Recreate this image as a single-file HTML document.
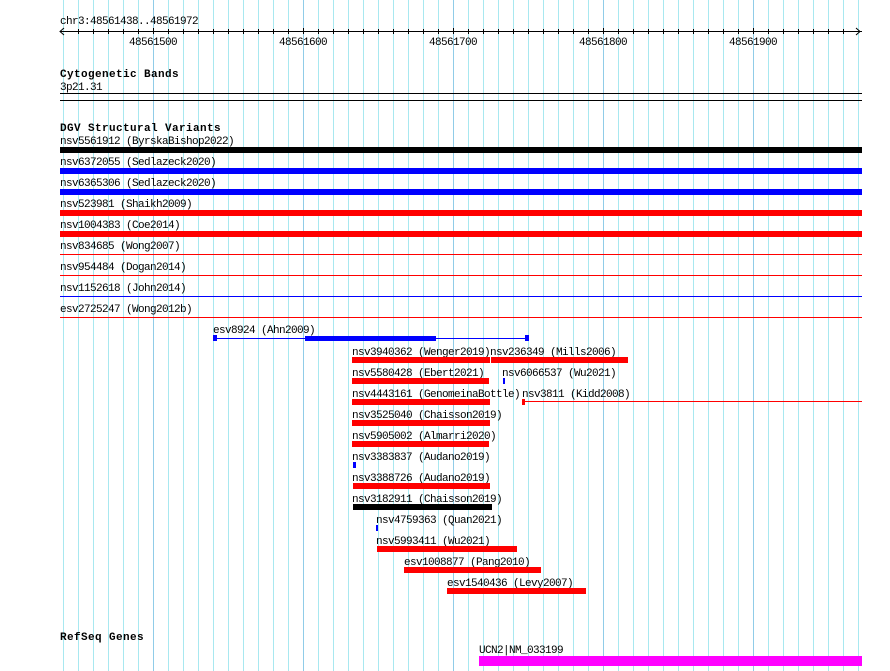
<!DOCTYPE html>
<html><head><meta charset="utf-8"><style>
html,body{margin:0;padding:0;background:#fff;}
body{width:890px;height:671px;position:relative;overflow:hidden;font-family:"Liberation Mono","DejaVu Sans Mono",monospace;font-size:11px;letter-spacing:-0.6px;line-height:10px;color:#000;}
.a{position:absolute;white-space:pre;margin-top:2px;}
.b{font-weight:bold;letter-spacing:0.4px;}
.G{position:absolute;top:0;height:671px;width:1px;background:#90cce8;}
.r{position:absolute;}
.t{position:absolute;top:29px;width:1px;height:5px;background:#000;}
</style></head><body>
<div class="r" style="left:63px;top:0;width:796px;height:671px;background:repeating-linear-gradient(to right,#a8e8f0 0,#a8e8f0 1px,transparent 1px,transparent 15px);"></div>
<div class="G" style="left:153px"></div><div class="G" style="left:303px"></div><div class="G" style="left:453px"></div><div class="G" style="left:603px"></div><div class="G" style="left:753px"></div>

<div class="a" style="left:60px;top:15px">chr3:48561438..48561972</div>
<div class="r" style="left:60px;top:31px;width:802px;height:1px;background:#000"></div>
<svg class="r" style="left:59px;top:27px" width="6" height="9"><path d="M5 1 L1 4.5 L5 8" stroke="#000" fill="none"/></svg>
<svg class="r" style="left:855px;top:27px" width="6" height="9"><path d="M1 1 L5 4.5 L1 8" stroke="#000" fill="none"/></svg>
<div class="t" style="left:78px"></div><div class="t" style="left:93px"></div><div class="t" style="left:108px"></div><div class="t" style="left:123px"></div><div class="t" style="left:138px"></div><div class="t" style="left:153px;top:28px;height:6px"></div><div class="t" style="left:168px"></div><div class="t" style="left:183px"></div><div class="t" style="left:198px"></div><div class="t" style="left:213px"></div><div class="t" style="left:228px"></div><div class="t" style="left:243px"></div><div class="t" style="left:258px"></div><div class="t" style="left:273px"></div><div class="t" style="left:288px"></div><div class="t" style="left:303px;top:28px;height:6px"></div><div class="t" style="left:318px"></div><div class="t" style="left:333px"></div><div class="t" style="left:348px"></div><div class="t" style="left:363px"></div><div class="t" style="left:378px"></div><div class="t" style="left:393px"></div><div class="t" style="left:408px"></div><div class="t" style="left:423px"></div><div class="t" style="left:438px"></div><div class="t" style="left:453px;top:28px;height:6px"></div><div class="t" style="left:468px"></div><div class="t" style="left:483px"></div><div class="t" style="left:498px"></div><div class="t" style="left:513px"></div><div class="t" style="left:528px"></div><div class="t" style="left:543px"></div><div class="t" style="left:558px"></div><div class="t" style="left:573px"></div><div class="t" style="left:588px"></div><div class="t" style="left:603px;top:28px;height:6px"></div><div class="t" style="left:618px"></div><div class="t" style="left:633px"></div><div class="t" style="left:648px"></div><div class="t" style="left:663px"></div><div class="t" style="left:678px"></div><div class="t" style="left:693px"></div><div class="t" style="left:708px"></div><div class="t" style="left:723px"></div><div class="t" style="left:738px"></div><div class="t" style="left:753px;top:28px;height:6px"></div><div class="t" style="left:768px"></div><div class="t" style="left:783px"></div><div class="t" style="left:798px"></div><div class="t" style="left:813px"></div><div class="t" style="left:828px"></div><div class="t" style="left:843px"></div>
<div class="a" style="left:129px;top:36px">48561500</div>
<div class="a" style="left:279px;top:36px">48561600</div>
<div class="a" style="left:429px;top:36px">48561700</div>
<div class="a" style="left:579px;top:36px">48561800</div>
<div class="a" style="left:729px;top:36px">48561900</div>

<div class="a b" style="left:60px;top:68px">Cytogenetic Bands</div>
<div class="a" style="left:60px;top:81px">3p21.31</div>
<div class="r" style="left:60px;top:93px;width:802px;height:1px;background:#000"></div>
<div class="r" style="left:60px;top:100px;width:802px;height:1px;background:#000"></div>

<div class="a b" style="left:60px;top:122px">DGV Structural Variants</div>
<div class="a" style="left:60px;top:135px">nsv5561912 (ByrskaBishop2022)</div>
<div class="r" style="left:60px;top:147px;width:802px;height:6px;background:#000"></div>
<div class="a" style="left:60px;top:156px">nsv6372055 (Sedlazeck2020)</div>
<div class="r" style="left:60px;top:168px;width:802px;height:6px;background:#0000ff"></div>
<div class="a" style="left:60px;top:177px">nsv6365306 (Sedlazeck2020)</div>
<div class="r" style="left:60px;top:189px;width:802px;height:6px;background:#0000ff"></div>
<div class="a" style="left:60px;top:198px">nsv523981 (Shaikh2009)</div>
<div class="r" style="left:60px;top:210px;width:802px;height:6px;background:#ff0000"></div>
<div class="a" style="left:60px;top:219px">nsv1004383 (Coe2014)</div>
<div class="r" style="left:60px;top:231px;width:802px;height:6px;background:#ff0000"></div>
<div class="a" style="left:60px;top:240px">nsv834685 (Wong2007)</div>
<div class="r" style="left:60px;top:254px;width:802px;height:1px;background:#ff0000"></div>
<div class="a" style="left:60px;top:261px">nsv954484 (Dogan2014)</div>
<div class="r" style="left:60px;top:275px;width:802px;height:1px;background:#ff0000"></div>
<div class="a" style="left:60px;top:282px">nsv1152618 (John2014)</div>
<div class="r" style="left:60px;top:296px;width:802px;height:1px;background:#0000ff"></div>
<div class="a" style="left:60px;top:303px">esv2725247 (Wong2012b)</div>
<div class="r" style="left:60px;top:317px;width:802px;height:1px;background:#ff0000"></div>

<div class="a" style="left:213px;top:324px">esv8924 (Ahn2009)</div>
<div class="r" style="left:213px;top:335px;width:4px;height:6px;background:#0000ff"></div>
<div class="r" style="left:217px;top:338px;width:310px;height:1px;background:#0000ff"></div>
<div class="r" style="left:305px;top:336px;width:131px;height:5px;background:#0000ff"></div>
<div class="r" style="left:525px;top:335px;width:4px;height:6px;background:#0000ff"></div>

<div class="a" style="left:352px;top:346px">nsv3940362 (Wenger2019)</div>
<div class="r" style="left:352px;top:357px;width:138px;height:6px;background:#ff0000"></div>
<div class="a" style="left:490px;top:346px">nsv236349 (Mills2006)</div>
<div class="r" style="left:491px;top:357px;width:137px;height:6px;background:#ff0000"></div>

<div class="a" style="left:352px;top:367px">nsv5580428 (Ebert2021)</div>
<div class="r" style="left:352px;top:378px;width:137px;height:6px;background:#ff0000"></div>
<div class="a" style="left:502px;top:367px">nsv6066537 (Wu2021)</div>
<div class="r" style="left:503px;top:378px;width:2px;height:6px;background:#0000ff"></div>

<div class="a" style="left:352px;top:388px">nsv4443161 (GenomeinaBottle)</div>
<div class="r" style="left:352px;top:399px;width:138px;height:6px;background:#ff0000"></div>
<div class="a" style="left:522px;top:388px">nsv3811 (Kidd2008)</div>
<div class="r" style="left:522px;top:399px;width:3px;height:6px;background:#ff0000"></div>
<div class="r" style="left:525px;top:401px;width:337px;height:1px;background:#ff0000"></div>

<div class="a" style="left:352px;top:409px">nsv3525040 (Chaisson2019)</div>
<div class="r" style="left:352px;top:420px;width:138px;height:6px;background:#ff0000"></div>
<div class="a" style="left:352px;top:430px">nsv5905002 (Almarri2020)</div>
<div class="r" style="left:352px;top:441px;width:137px;height:6px;background:#ff0000"></div>
<div class="a" style="left:352px;top:451px">nsv3383837 (Audano2019)</div>
<div class="r" style="left:353px;top:462px;width:3px;height:6px;background:#0000ff"></div>
<div class="a" style="left:352px;top:472px">nsv3388726 (Audano2019)</div>
<div class="r" style="left:353px;top:483px;width:137px;height:6px;background:#ff0000"></div>
<div class="a" style="left:352px;top:493px">nsv3182911 (Chaisson2019)</div>
<div class="r" style="left:353px;top:504px;width:139px;height:6px;background:#000"></div>
<div class="a" style="left:376px;top:514px">nsv4759363 (Quan2021)</div>
<div class="r" style="left:376px;top:525px;width:2px;height:6px;background:#0000ff"></div>
<div class="a" style="left:376px;top:535px">nsv5993411 (Wu2021)</div>
<div class="r" style="left:377px;top:546px;width:140px;height:6px;background:#ff0000"></div>
<div class="a" style="left:404px;top:556px">esv1008877 (Pang2010)</div>
<div class="r" style="left:404px;top:567px;width:137px;height:6px;background:#ff0000"></div>
<div class="a" style="left:447px;top:577px">esv1540436 (Levy2007)</div>
<div class="r" style="left:447px;top:588px;width:139px;height:6px;background:#ff0000"></div>

<div class="a b" style="left:60px;top:631px">RefSeq Genes</div>
<div class="a" style="left:479px;top:644px">UCN2|NM_033199</div>
<div class="r" style="left:479px;top:656px;width:383px;height:10px;background:#ff00ff"></div>
</body></html>
